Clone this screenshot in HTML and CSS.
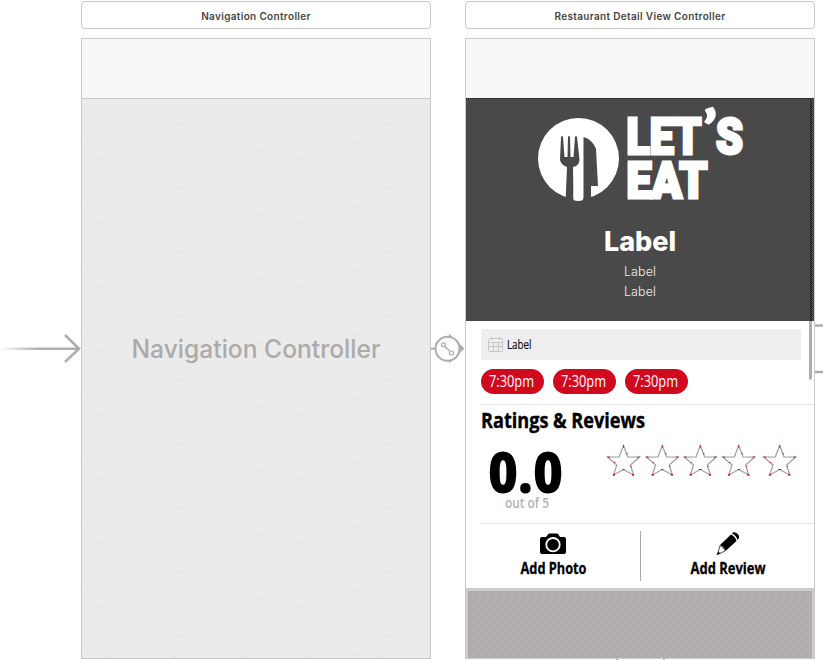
FILE: index.html
```html
<!DOCTYPE html>
<html lang="en">
<head>
<meta charset="utf-8">
<title>Storyboard</title>
<link rel="stylesheet" href="styles.css">
</head>
<body>
<main class="board">
  <section class="scene">
    <h2 class="scene-title">Navigation Controller</h2>
    <div class="device nav">
      <div class="bar"></div>
      <svg class="nav-body" viewBox="0 0 348 559">
        <defs><pattern id="dots" width="67" height="64" patternUnits="userSpaceOnUse">
          <path fill="#d3d3d3" d="M4 7h1v1h-1zM23 10h1v1h-1zM45 5h1v1h-1zM60 15h1v1h-1zM13 26h1v1h-1zM34 24h1v1h-1zM52 31h1v1h-1zM5 43h1v1h-1zM26 45h1v1h-1zM43 51h1v1h-1zM62 47h1v1h-1zM17 59h1v1h-1z"/>
        </pattern></defs>
        <rect width="348" height="559" fill="url(#dots)"/>
        <text x="49.5" y="259" textLength="249" lengthAdjust="spacingAndGlyphs" class="nav-name">Navigation Controller</text>
      </svg>
    </div>
  </section>

  <section class="scene">
    <h2 class="scene-title">Restaurant Detail View Controller</h2>
    <div class="device detail">
      <div class="bar"></div>
      <div class="hero">
        <svg class="logo" width="208" height="104" viewBox="536 106 208 104">
          <circle cx="578.5" cy="158.5" r="40.5" fill="#fff"/>
          <g fill="#494949">
            <path d="M561 137Q562 135 563 137L564.5 157H567.5L568 137Q569 135 570 137L570.5 157H573.5L575 137Q576 135 577 137L579.5 160Q579 166 573 167L573.5 203H565.5L567 167Q561 165 560 160Z"/>
            <path d="M583.5 137Q592 139 596 149L598 186H591V203H583.5Z"/>
          </g>
          <path fill="#fff" d="M573.5 190H583V200Q578 202 573.5 200Z"/>
          <g class="logo-text">
            <text x="626.5" y="153.5" textLength="75" lengthAdjust="spacingAndGlyphs">LET</text>
            <text x="703" y="146" textLength="14" lengthAdjust="spacingAndGlyphs" class="apostrophe">’</text>
            <text x="716" y="153.5" textLength="27" lengthAdjust="spacingAndGlyphs">S</text>
            <text x="626.5" y="198" textLength="81" lengthAdjust="spacingAndGlyphs">EAT</text>
          </g>
        </svg>
        <h1 class="hero-name">Label</h1>
        <p class="hero-sub">Label</p>
        <p class="hero-sub">Label</p>
      </div>
      <div class="booking">
        <div class="date">
          <svg width="16" height="16" viewBox="0 0 16 16" fill="none" stroke="#c6c6c6"><rect x=".5" y="1.5" width="14" height="13" rx="2"/><path d="M.5 5.5h14M.5 9.5h14M5.5 5.5v9M10.5 5.5v9M3.5 0v3M11.5 0v3"/></svg>
          <svg width="26" height="20"><text x="-1" y="14" textLength="24.5" lengthAdjust="spacingAndGlyphs" class="date-text">Label</text></svg>
        </div>
        <div class="times">
          <span class="time"><svg width="46" height="24"><text x="0" y="17.5" textLength="45" lengthAdjust="spacingAndGlyphs">7:30pm</text></svg></span>
          <span class="time"><svg width="46" height="24"><text x="0" y="17.5" textLength="45" lengthAdjust="spacingAndGlyphs">7:30pm</text></svg></span>
          <span class="time"><svg width="46" height="24"><text x="0" y="17.5" textLength="45" lengthAdjust="spacingAndGlyphs">7:30pm</text></svg></span>
        </div>
      </div>
      <div class="reviews">
        <svg class="heading" width="170" height="32"><text x="1" y="23" textLength="164" lengthAdjust="spacingAndGlyphs">Ratings &amp; Reviews</text></svg>
        <div class="rating-row">
          <svg class="score" width="92" height="76"><text x="8" y="56" textLength="75" lengthAdjust="spacingAndGlyphs" class="score-num">0.0</text><text x="25" y="71" textLength="44" lengthAdjust="spacingAndGlyphs" class="score-of">out of 5</text></svg>
          <svg width="192" height="34" viewBox="606 444 192 34" fill="#fff">
            <defs><g id="star"><path stroke="#a5a3a4" stroke-width="1.3" d="M0-15.5L4.3-4.2L16-4L7 4L10 14L0 8.5L-10 14L-6.7 4L-16-4L-4.3-4.2Z"/><path fill="#d0021b" d="M-.5-15.5h1v2h-1zM3-8h1v1h-1zM14-4.5h2v1h-2zM7 5h1v1h-1zM-1 8h2v1h-2zM8.5 13h2v1.5h-2zM-10.5 13h2v1.5h-2zM-9.5 1h1v1h-1zM-16-4.5h2v1h-2z"/></g></defs>
            <use href="#star" x="623.5" y="461"/><use href="#star" x="662.3" y="461"/><use href="#star" x="700.3" y="461"/><use href="#star" x="738.7" y="461"/><use href="#star" x="779.7" y="461"/>
          </svg>
        </div>
      </div>
      <div class="actions">
        <div class="action">
          <svg width="26" height="24" viewBox="0 0 26 24"><path d="M2 5H6L8 2.5Q8.5 1.5 9.5 1.5H17Q18 1.5 18.5 2.5L20 5H24Q26 5 26 7V20Q26 22 24 22H2Q0 22 0 20V7Q0 5 2 5Z"/><circle cx="13" cy="12.7" r="6.7" fill="none" stroke="#fff" stroke-width="1.8"/></svg>
          <svg width="66" height="20"><text x="0.5" y="15.5" textLength="66" lengthAdjust="spacingAndGlyphs">Add Photo</text></svg>
        </div>
        <div class="action">
          <svg width="24" height="24" viewBox="0 0 24 24"><path d="M17 1.5Q18.5-.5 21 .8Q24.500 2.500 24 6L22.500 8Q21.500 3.500 17 1.500ZM16 2.500Q20.500 4.500 21.500 9L10.500 19Q9.500 15 5 13Z"/><path fill="#fff" stroke="#222" stroke-width=".8" d="M5 13.500Q9 15.500 10 19L2.500 22.500Z"/><path d="M3.200 19.500L5.500 21.500L1.500 23Z"/></svg>
          <svg width="75" height="20"><text x="0.5" y="15.5" textLength="75" lengthAdjust="spacingAndGlyphs">Add Review</text></svg>
        </div>
      </div>
      <div class="footer"><svg width="100%" height="100%"><defs><pattern id="grain" width="8" height="8" patternUnits="userSpaceOnUse"><path fill="#d2d0d1" d="M1 2h1v1H1zM5 6h1v1H5z"/></pattern></defs><rect x="3" y="4" width="340" height="64" fill="url(#grain)"/></svg></div>
    </div>
  </section>

  <svg class="connections" width="823" height="660" viewBox="0 0 823 660" fill="none">
    <defs><linearGradient id="fade"><stop stop-color="#b1adae" stop-opacity="0"/><stop offset=".5" stop-color="#b1adae"/></linearGradient></defs>
    <path fill="url(#fade)" d="M0 347.5H78V350H0z"/>
    <path stroke="#b1adae" stroke-width="2.6" d="M65 335L79 348.7L65 362"/>
    <path stroke="#b1adae" stroke-width="2" d="M431 348.7H436"/>
    <path fill="#b1adae" d="M449 333.5L464.500 348.500L449 363.500z"/>
    <circle cx="447.5" cy="348.7" r="12" fill="#fff" stroke="#b1adae" stroke-width="2"/>
    <path stroke="#b1adae" stroke-width="1.5" d="M445 346.5L450 351.5"/>
    <circle cx="443.5" cy="344.8" r="2" stroke="#b1adae" stroke-width="1.2"/><circle cx="451.5" cy="353" r="2" stroke="#b1adae" stroke-width="1.2"/>
    <path stroke="#b1adae" stroke-width="2.5" d="M815 325.5H823M815 372H823"/>
    <path fill="#494949" d="M809 101Q809 99 810.5 99T812 101V321H809z"/>
    <path stroke="#111" stroke-dasharray="1 1" d="M810.5 100V321M811.5 101V321M466 98.5H814"/>
    <path fill="#b1adae" d="M809 321H812V378Q812 380 810.5 380T809 378z"/>
    <path fill="#aaa" d="M616 659h2v1h-2zM663 659h2v1h-2z"/>
  </svg>
</main>
</body>
</html>
```
FILE: styles.css
```css
* { box-sizing: border-box; }
body { margin: 0; background: #fff; font-family: Inter, "Liberation Sans", sans-serif; overflow: hidden; }
svg { overflow: visible; }
.board { position: relative; display: flex; gap: 34px; width: 823px; height: 660px; padding: 1px 0 0 81px; }
.scene { width: 350px; }
.scene-title { height: 28px; margin: 0 0 9px; border: 1px solid #c9c9c9; border-radius: 4px; text-align: center; font-size: 10px; font-weight: 600; line-height: 28px; letter-spacing: .34px; color: #454545; }
.device { display: flex; flex-direction: column; height: 621px; border: 1px solid #c9c9c9; }
.bar { flex: 0 0 60px; background: #f8f8f8; border-bottom: 1px solid #c9c9c9; }
.nav { background: #ebebeb; }
.nav-body { flex: 1; min-height: 0; width: 348px; }
.nav-name { font-size: 25px; font-weight: 500; fill: #acaaab; }
.detail .bar { flex-basis: 59px; border: 0; }
.hero { flex: 0 0 223px; background: #494949; color: #fff; text-align: center; padding-top: 8px; }
.logo { display: block; margin: 0 0 0 70px; }
.detail .logo-text text { font-family: Roboto, sans-serif; font-size: 50px; font-weight: 900; fill: #fff; stroke: #fff; stroke-width: 3px; }
.detail .logo-text .apostrophe { font-family: Lato, sans-serif; font-size: 50px; stroke-width: 1.5px; }
.hero-name { margin: 14px 0 0; font-size: 27px; line-height: 36px; font-weight: 800; }
.hero-sub { margin: 0; font-size: 12.5px; line-height: 20px; font-weight: 300; letter-spacing: .1px; color: #eee; }
.hero-name + .hero-sub { margin-top: 2px; }
.booking { flex: 0 0 83px; padding: 8px 13px 0 14.5px; }
.date { display: flex; align-items: center; gap: 4px; height: 31px; padding-left: 7px; background: #eee; }
.detail text { font-family: "Open Sans", "Noto Sans", sans-serif; }
.date-text { font-size: 13.5px; fill: #111; stroke: #111; stroke-width: .2px; }
.times { display: flex; gap: 9px; margin-top: 9px; }
.time { display: flex; justify-content: center; width: 63px; height: 25px; border-radius: 13px; background: #d0091f; }
.time text { font-size: 15.5px; fill: #fff; }
.reviews { flex: 0 0 119px; margin-left: 14px; border-top: 1px solid #e4e4e4; }
.heading { display: block; font-size: 21.5px; font-weight: 700; stroke: #000; stroke-width: .4px; }
.rating-row { display: flex; align-items: flex-start; justify-content: space-between; padding: 7px 16px 0 0; }
.score { margin-top: -7px; }
.score-num { font-size: 56px; font-weight: 800; }
.score-of { font-size: 14px; font-weight: 600; fill: #b5b2b3; }
.actions { display: flex; flex: 0 0 65px; margin-left: 14px; border-top: 1px solid #e4e4e4; padding-top: 7px; }
.action { display: flex; flex-direction: column; align-items: center; height: 50px; width: 174px; padding-top: 1px; font-size: 15.5px; font-weight: 700; }
.action text { stroke: #000; stroke-width: .3px; }
.action svg { flex-shrink: 0; }
.action:first-child { width: 161px; padding-right: 13px; border-right: 1px solid #aaa; }
.action svg + svg { margin-top: 2px; }
.footer { flex: 1; min-height: 0; background: #b1adae; border: solid #ccc; border-width: 3px 2px 0; }
.footer svg { display: block; }
.connections { position: absolute; inset: 0; pointer-events: none; }
```
